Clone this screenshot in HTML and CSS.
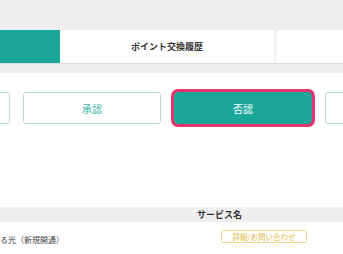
FILE: index.html
```html
<!DOCTYPE html>
<html lang="ja">
<head>
<meta charset="utf-8">
<link rel="stylesheet" href="styles.css">
</head>
<body>
<div class="page">
  <div class="top"></div>
  <div class="tabs">
    <div class="tab tab-active"></div>
    <div class="tab tab-main">ポイント交換履歴</div>
    <div class="tab-sep"></div>
    <div class="tab tab-rest"></div>
  </div>
  <div class="band"></div>
  <div class="content">
    <div class="filters">
      <div class="btn"></div>
      <div class="btn">承認</div>
      <div class="btn btn-on">否認</div>
      <div class="btn"></div>
    </div>
    <div class="thead">サービス名</div>
    <div class="row">
      <span class="name">る光（新規開通）</span>
      <span class="detail">詳細/お問い合わせ</span>
    </div>
  </div>
</div>
</body>
</html>
```
FILE: styles.css
```css
* { box-sizing: border-box; }
html, body { margin: 0; padding: 0; }
body {
  width: 343px;
  height: 254px;
  overflow: hidden;
  background: #fff;
  font-family: "Noto Sans CJK JP", "Noto Sans", sans-serif;
}
.page { width: 343px; overflow: hidden; }
.top { height: 30px; background: #eeeeee; }
.tabs {
  display: flex;
  height: 33px;
  background: #eeeeee;
  box-shadow: 0 1px 1px rgba(0,0,0,0.08);
  position: relative;
}
.tab {
  height: 33px;
  background: #fff;
  display: flex;
  align-items: center;
  justify-content: center;
}
.tab-active { width: 60px; background: #1aa79a; }
.tab-main {
  width: 214px;
  font-size: 9px;
  font-weight: 700;
  color: #333;
}
.tab-sep { width: 3px; margin-top: 2px; height: 31px; background: #f4f4f4; }
.tab-rest { flex: 1; }
.band { height: 10px; background: #eeeeee; }
.content { padding-top: 19px; }
.filters {
  display: flex;
  gap: 13px;
  margin-left: -128px;
  width: 700px;
}
.btn {
  flex: 0 0 138px;
  height: 32px;
  border: 1px solid #b6ddd7;
  border-radius: 3px;
  display: flex;
  align-items: center;
  justify-content: center;
  font-size: 10px;
  color: #3bb3a4;
  background: #fff;
}
.btn-on {
  background: #1aa79a;
  border-color: #1aa79a;
  color: #fff;
  box-shadow: 0 0 0 3px #e8346d;
  border-radius: 4px;
}
.thead {
  margin-top: 83px;
  height: 15px;
  background: #efefef;
  font-size: 9px;
  font-weight: 700;
  color: #333;
  line-height: 15px;
  padding-left: 197px;
}
.row {
  display: flex;
  align-items: center;
  height: 32px;
  padding-right: 36px;
}
.name {
  font-size: 8px;
  color: #444;
  margin-left: 0;
  margin-top: 2px;
}
.detail {
  margin-left: auto;
  width: 86px;
  height: 13px;
  border: 1px solid #efd98c;
  border-radius: 2px;
  font-size: 7.5px;
  color: #dfb53e;
  display: flex;
  align-items: center;
  justify-content: center;
  margin-top: -3px;
}
```
